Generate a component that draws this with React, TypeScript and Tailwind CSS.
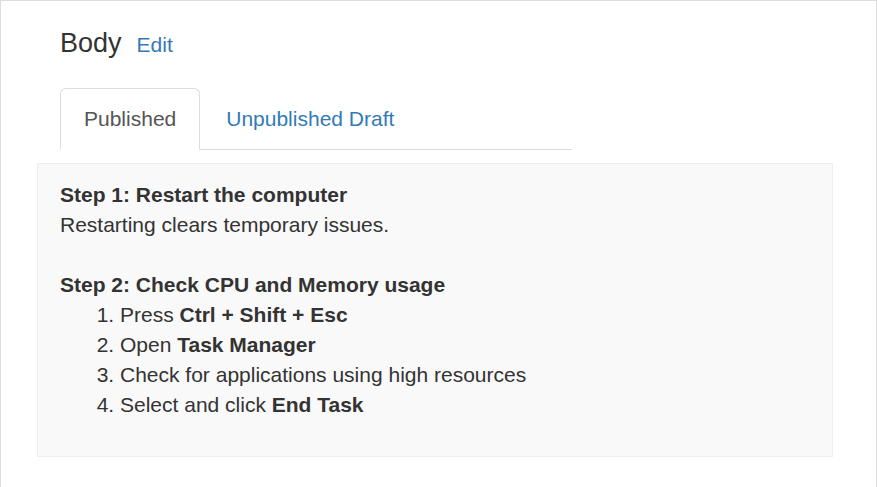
export default function App() {
  return (
    <div className="h-[488px] border border-b-0 border-[#ddd] bg-white font-['Liberation_Sans',Arial,sans-serif] text-[21px] leading-[30px] text-[#333]">
      {/* Titolo */}
      <div className="flex items-baseline gap-[15px] pl-[59px] pt-[27px]">
        <h4 className="text-[27px] leading-[30px] font-normal text-[#333]">Body</h4>
        <a href="#" className="text-[21px] text-[#337ab7]">
          Edit
        </a>
      </div>

      {/* Tabs */}
      <ul className="mt-[28px] ml-[59px] flex w-[512px] border-b border-[#ddd]">
        <li className="-mb-px rounded-t-[6px] border border-[#ddd] border-b-transparent bg-white px-[23px] py-[15px] text-[#555]">
          Published
        </li>
        <li className="-mb-px ml-[3px] border border-transparent px-[22px] py-[15px] text-[#337ab7]">
          Unpublished Draft
        </li>
      </ul>

      {/* Contenuto */}
      <div className="mt-[13px] ml-[36px] w-[796px] border border-[#eee] bg-[#f9f9f9] pt-[16px] pr-[22px] pb-[36px] pl-[22px]">
        <p className="font-bold">Step 1: Restart the computer</p>
        <p>Restarting clears temporary issues.</p>
        <p>&nbsp;</p>
        <p className="font-bold">Step 2: Check CPU and Memory usage</p>
        <ol className="list-decimal pl-[60px]">
          <li>
            Press <b>Ctrl + Shift + Esc</b>
          </li>
          <li>
            Open <b>Task Manager</b>
          </li>
          <li>Check for applications using high resources</li>
          <li>
            Select and click <b>End Task</b>
          </li>
        </ol>
      </div>
    </div>
  );
}
